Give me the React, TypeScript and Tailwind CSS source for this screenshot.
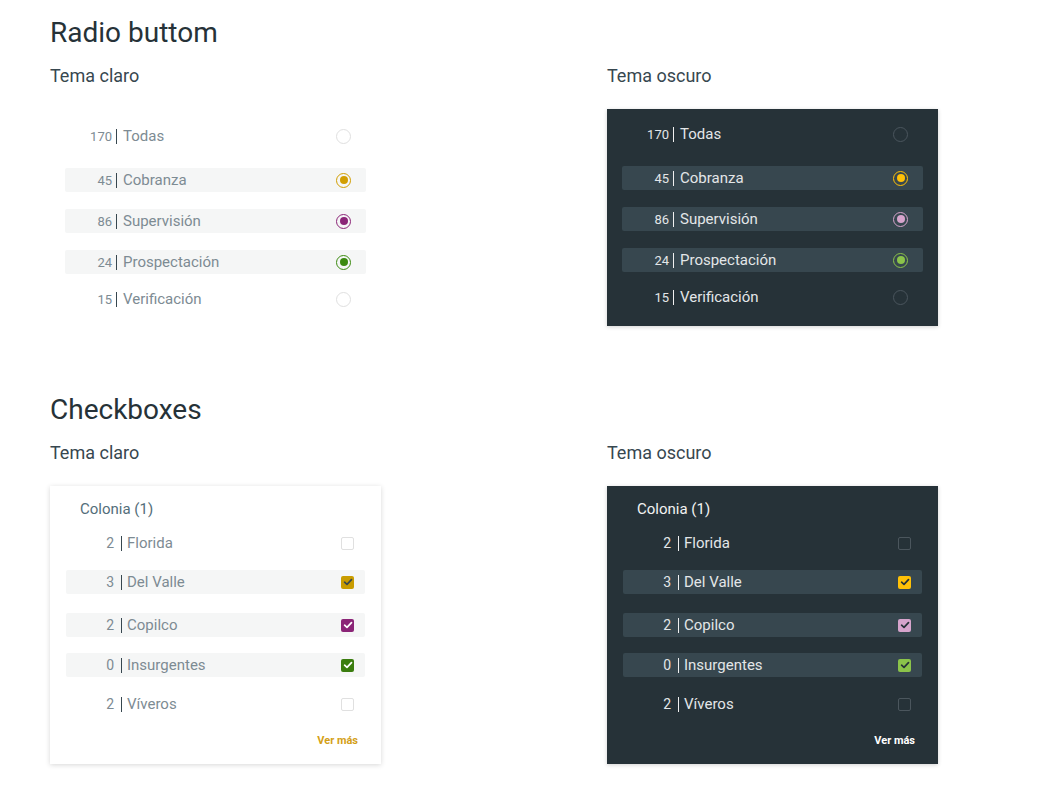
import React from 'react'

type Theme = 'light' | 'dark'

type Item = {
  count: number
  label: string
  tone: 'none' | 'gold' | 'purple' | 'green'
}

const radioItems: Item[] = [
  { count: 170, label: 'Todas', tone: 'none' },
  { count: 45, label: 'Cobranza', tone: 'gold' },
  { count: 86, label: 'Supervisión', tone: 'purple' },
  { count: 24, label: 'Prospectación', tone: 'green' },
  { count: 15, label: 'Verificación', tone: 'none' },
]

const checkItems: Item[] = [
  { count: 2, label: 'Florida', tone: 'none' },
  { count: 3, label: 'Del Valle', tone: 'gold' },
  { count: 2, label: 'Copilco', tone: 'purple' },
  { count: 0, label: 'Insurgentes', tone: 'green' },
  { count: 2, label: 'Víveros', tone: 'none' },
]

// per-row top margins, the original spacing is a bit uneven
const radioGaps = ['', 'mt-[20px]', 'mt-[17px]', 'mt-[17px]', 'mt-[13px]']
const checkGaps = ['mt-[13px]', 'mt-[15px]', 'mt-[19px]', 'mt-[16px]', 'mt-[15px]']

const radioColors = {
  light: {
    none: 'border-[#e0e0e0]',
    gold: 'border-[#d29e00] after:bg-[#d29e00]',
    purple: 'border-[#8b2577] after:bg-[#8b2577]',
    green: 'border-[#3b8a0f] after:bg-[#3b8a0f]',
  },
  dark: {
    none: 'border-[#4a555d]',
    gold: 'border-[#ffc107] after:bg-[#ffc107]',
    purple: 'border-[#d6a4cc] after:bg-[#d6a4cc]',
    green: 'border-[#8bc34a] after:bg-[#8bc34a]',
  },
}

const checkColors = {
  light: {
    none: 'border border-[#e0e0e0]',
    gold: 'bg-[#c99c00] text-[#37474f]',
    purple: 'bg-[#8b2577] text-white',
    green: 'bg-[#3b7d0f] text-white',
  },
  dark: {
    none: 'border border-[#4b565d]',
    gold: 'bg-[#ffc107] text-[#263238]',
    purple: 'bg-[#d6a4cc] text-[#263238]',
    green: 'bg-[#8bc34a] text-[#263238]',
  },
}

function Radio({ theme, tone }: { theme: Theme; tone: Item['tone'] }) {
  const on = tone !== 'none'
  return (
    <span
      className={`relative flex h-[15px] w-[15px] items-center justify-center rounded-full border-[1.5px] ${radioColors[theme][tone]} ${
        on ? "after:h-[8px] after:w-[8px] after:rounded-full after:content-['']" : ''
      }`}
    />
  )
}

function Check({ theme, tone }: { theme: Theme; tone: Item['tone'] }) {
  const on = tone !== 'none'
  return (
    <span className={`flex h-[13px] w-[13px] items-center justify-center rounded-[2px] ${checkColors[theme][tone]}`}>
      {on && (
        <svg width="10" height="10" viewBox="0 0 10 10" fill="none">
          <path d="M1.6 5.2 L4 7.4 L8.5 2.6" stroke="currentColor" strokeWidth="1.7" strokeLinecap="round" strokeLinejoin="round" />
        </svg>
      )}
    </span>
  )
}

function Row({
  item,
  theme,
  kind,
  gap,
}: {
  item: Item
  theme: Theme
  kind: 'radio' | 'check'
  gap: string
}) {
  const dark = theme === 'dark'
  const highlight = item.tone !== 'none'
  const bg = highlight ? (dark ? 'bg-[#37474f]' : 'bg-[#f5f6f6]') : ''
  const text = dark ? 'text-[#e3e6e8]' : 'text-[#7d8b93]'
  const sep = dark ? 'bg-[#f0f0f0]' : 'bg-[#37474f]'
  const isRadio = kind === 'radio'

  return (
    <div className={`${gap} flex h-6 items-center rounded-[2px] ${bg} ${isRadio ? 'pr-[15px]' : 'pr-[11px]'}`}>
      <span className={`${isRadio ? 'w-[47px] text-[13px]' : 'w-[48px] text-[14px]'} text-right leading-none ${text}`}>
        {item.count}
      </span>
      <span className={`${isRadio ? 'ml-[4px]' : 'ml-[7px]'} h-[15px] w-px ${sep}`} />
      <span className={`${isRadio ? 'ml-[6px]' : 'ml-[5px]'} flex-1 text-[15px] leading-none ${text}`}>{item.label}</span>
      {isRadio ? <Radio theme={theme} tone={item.tone} /> : <Check theme={theme} tone={item.tone} />}
    </div>
  )
}

function RadioCard({ theme }: { theme: Theme }) {
  const dark = theme === 'dark'
  return (
    <div
      className={`w-[331px] px-[15px] ${
        dark ? 'bg-[#263238] pt-[13px] pb-[17px] shadow-[0_1px_4px_rgba(0,0,0,0.18)]' : 'pt-[15px] pb-[15px]'
      }`}
    >
      {radioItems.map((item, i) => (
        <Row key={item.label} item={item} theme={theme} kind="radio" gap={radioGaps[i]} />
      ))}
    </div>
  )
}

function CheckCard({ theme }: { theme: Theme }) {
  const dark = theme === 'dark'
  return (
    <div
      className={`w-[331px] px-[16px] pt-[15px] pb-[16px] ${
        dark ? 'bg-[#263238] shadow-[0_1px_4px_rgba(0,0,0,0.18)]' : 'bg-white shadow-[0_1px_5px_rgba(0,0,0,0.16)]'
      }`}
    >
      <p className={`pl-[14px] text-[15px] leading-[17px] ${dark ? 'text-[#f2f2f2]' : 'text-[#546e7a]'}`}>Colonia (1)</p>
      {checkItems.map((item, i) => (
        <Row key={item.label} item={item} theme={theme} kind="check" gap={checkGaps[i]} />
      ))}
      <div className="mt-[18px] flex justify-end pr-[7px]">
        <span className={`text-[11px] font-bold leading-[14px] ${dark ? 'text-white' : 'text-[#d4a017]'}`}>Ver más</span>
      </div>
    </div>
  )
}

function Section({ title, children }: { title: string; children: (theme: Theme) => React.ReactNode }) {
  return (
    <section>
      <h2 className="text-[28px] leading-[34px] text-[#263238]">{title}</h2>
      <div className="mt-[15px] grid grid-cols-[557px_1fr]">
        {(['light', 'dark'] as Theme[]).map((theme) => (
          <div key={theme}>
            <h3 className="mb-[22px] text-[18px] leading-[22px] text-[#37474f]">
              {theme === 'light' ? 'Tema claro' : 'Tema oscuro'}
            </h3>
            {children(theme)}
          </div>
        ))}
      </div>
    </section>
  )
}

export default function App() {
  return (
    <div className="min-h-screen bg-white pl-[50px] pt-[16px] font-['Roboto',sans-serif]">
      <Section title="Radio buttom">{(theme) => <RadioCard theme={theme} />}</Section>
      <div className="h-[67px]" />
      <Section title="Checkboxes">{(theme) => <CheckCard theme={theme} />}</Section>
    </div>
  )
}
